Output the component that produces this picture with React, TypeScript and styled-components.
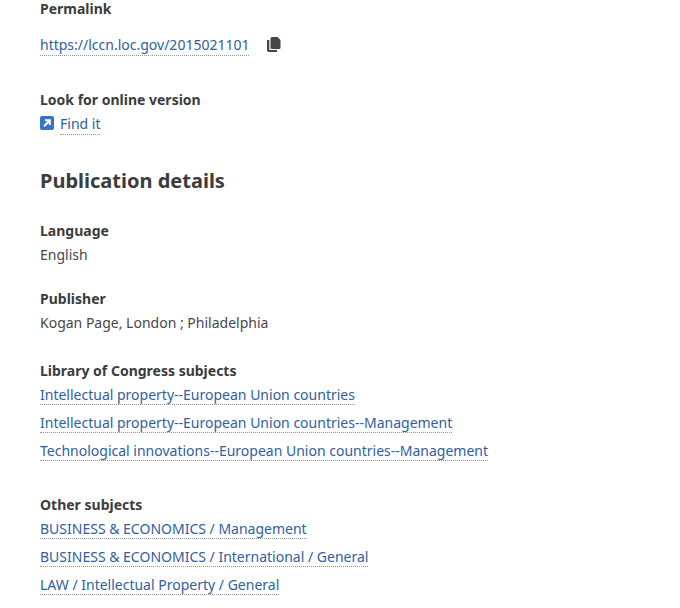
import React from "react";
import styled, { createGlobalStyle } from "styled-components";

const GlobalStyle = createGlobalStyle`
  html, body {
    margin: 0;
    padding: 0;
    background: #fff;
    overflow: hidden;
  }
  body {
    font-family: "Noto Sans", sans-serif;
    font-size: 14px;
    line-height: 20px;
    color: #484848;
  }
`;

const Page = styled.main`
  height: 608px;
  padding: 0 40px;
  box-sizing: border-box;
  overflow: hidden;
`;

const Section = styled.section<{ $top: number }>`
  margin-top: ${(p) => p.$top}px;
`;

const Label = styled.div<{ $first?: boolean }>`
  font-weight: 700;
  color: #3c3c3c;
  height: ${(p) => (p.$first ? 18 : 20)}px;
  line-height: ${(p) => (p.$first ? 18 : 20)}px;
`;

const Value = styled.div`
  margin-top: 4px;
  height: 20px;
`;

const Heading = styled.h2`
  margin: 33px 0 0;
  font-size: 20px;
  line-height: 28px;
  font-weight: 700;
  color: #3c3c3c;
`;

const TextLink = styled.a`
  color: #30609f;
  text-decoration: none;
  border-bottom: 1px dotted #9095a8;
`;

const PermalinkRow = styled.div`
  display: flex;
  align-items: center;
  gap: 18px;
  margin-top: 17px;
  height: 20px;
`;

const CopyIcon = styled.svg`
  width: 15px;
  height: 15px;
  margin-top: -1px;
  margin-left: -1px;
  fill: #454545;
`;

const FindRow = styled.div`
  display: flex;
  align-items: center;
  gap: 6px;
  margin-top: 4px;
  height: 20px;
`;

const ExternalIcon = styled.svg`
  width: 14px;
  height: 14px;
  margin-top: -2px;
`;

const LinkList = styled.ul`
  list-style: none;
  margin: 4px 0 0;
  padding: 0;
  display: flex;
  flex-direction: column;
  gap: 8px;
`;

const LinkItem = styled.li`
  height: 20px;
`;

const lcSubjects = [
  "Intellectual property--European Union countries",
  "Intellectual property--European Union countries--Management",
  "Technological innovations--European Union countries--Management",
];

const otherSubjects = [
  "BUSINESS & ECONOMICS / Management",
  "BUSINESS & ECONOMICS / International / General",
  "LAW / Intellectual Property / General",
];

function SubjectList({ items }: { items: string[] }) {
  return (
    <LinkList>
      {items.map((item) => (
        <LinkItem key={item}>
          <TextLink href="#">{item}</TextLink>
        </LinkItem>
      ))}
    </LinkList>
  );
}

export default function App() {
  return (
    <Page>
      <GlobalStyle />
      <Section $top={0}>
        <Label $first>Permalink</Label>
        <PermalinkRow>
          <TextLink href="#">https://lccn.loc.gov/2015021101</TextLink>
          <CopyIcon viewBox="0 0 15 15">
            <path d="M4.500 1.500A1.500 1.500 0 0 1 6 0h5.500L14.500 3v7.500A1.500 1.500 0 0 1 13 12H6a1.500 1.500 0 0 1-1.500-1.500z" />
            <path d="M1.500 3H3.300V12.200c0 .5.300.9.800.9H11V15H3a2 2 0 0 1-2-2V3.500a.5.5 0 0 1 .5-.5z" />
          </CopyIcon>
        </PermalinkRow>
      </Section>
      <Section $top={35}>
        <Label>Look for online version</Label>
        <FindRow>
          <ExternalIcon viewBox="0 0 14 14">
            <rect width="14" height="14" rx="2" fill="#3673cc" />
            <path d="M4 10.200 9.500 4.700M5 4.200h4.800v4.800" stroke="#fff" strokeWidth="2" fill="none" />
          </ExternalIcon>
          <TextLink href="#">Find it</TextLink>
        </FindRow>
      </Section>
      <Heading>Publication details</Heading>
      <Section $top={26}>
        <Label>Language</Label>
        <Value>English</Value>
      </Section>
      <Section $top={24}>
        <Label>Publisher</Label>
        <Value>Kogan Page, London ; Philadelphia</Value>
      </Section>
      <Section $top={28}>
        <Label>Library of Congress subjects</Label>
        <SubjectList items={lcSubjects} />
      </Section>
      <Section $top={34}>
        <Label>Other subjects</Label>
        <SubjectList items={otherSubjects} />
      </Section>
    </Page>
  );
}
